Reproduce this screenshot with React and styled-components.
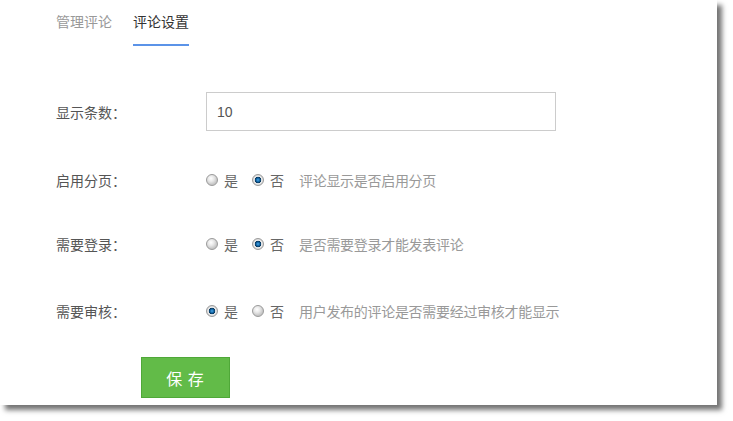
import styled, { createGlobalStyle } from "styled-components";

const GlobalStyle = createGlobalStyle`
  html, body {
    margin: 0;
    padding: 0;
    background: #fff;
    font-family: "Microsoft YaHei", "Noto Sans CJK SC", "Liberation Sans", sans-serif;
  }
`;

const settings = [
  { label: "需要登录", on: false, desc: "是否需要登录才能发表评论", mt: 44 },
  { label: "需要审核", on: true, desc: "用户发布的评论是否需要经过审核才能显示", mt: 47 },
];

function Radio({ checked, text }) {
  return (
    <Option>
      <Dot $checked={checked} />
      {text}
    </Option>
  );
}

function App() {
  return (
    <Page>
      <GlobalStyle />
      <Panel>
        <Tabs>
          <Tab>管理评论</Tab>
          <Tab $active>评论设置</Tab>
        </Tabs>
        <Form>
          <Row $mt={46}>
            <Label>显示条数：</Label>
            <Input defaultValue="10" />
          </Row>
          <Row $mt={39} $h={20}>
            <Label>启用分页：</Label>
            <Radio text="是" />
            <Radio checked text="否" />
            <Desc>评论显示是否启用分页</Desc>
          </Row>
          {settings.map((s) => (
            <Row key={s.label} $mt={s.mt} $h={20}>
              <Label>{s.label}：</Label>
              <Radio checked={s.on} text="是" />
              <Radio checked={!s.on} text="否" />
              <Desc>{s.desc}</Desc>
            </Row>
          ))}
          <SaveButton>保 存</SaveButton>
        </Form>
      </Panel>
    </Page>
  );
}

const Page = styled.div`
  width: 733px;
  height: 421px;
  background: #fff;
  overflow: hidden;
`;

const Panel = styled.div`
  width: 717px;
  height: 405px;
  background: #fff;
  box-shadow: 5px 5px 5px rgba(0, 0, 0, 0.55);
  box-sizing: border-box;
  padding-left: 56px;
`;

const Tabs = styled.div`
  display: flex;
  gap: 21px;
  height: 46px;
`;

const Tab = styled.div`
  height: 44px;
  line-height: 42px;
  font-size: 14px;
  color: ${(p) => (p.$active ? "#333" : "#999")};
  border-bottom: 2px solid ${(p) => (p.$active ? "#5b93e8" : "transparent")};
`;

const Form = styled.div`
  display: flex;
  flex-direction: column;
`;

const Row = styled.div`
  display: flex;
  align-items: center;
  margin-top: ${(p) => p.$mt}px;
  height: ${(p) => (p.$h ? `${p.$h}px` : "auto")};
`;

const Label = styled.div`
  width: 150px;
  font-size: 14px;
  color: #555;
`;

const Input = styled.input`
  width: 350px;
  height: 39px;
  box-sizing: border-box;
  border: 1px solid #ccc;
  padding: 0 10px;
  font-size: 14px;
  font-family: "Liberation Sans", sans-serif;
  color: #555;
  outline: none;
`;

const Option = styled.label`
  display: flex;
  align-items: center;
  font-size: 14px;
  color: #666;
  margin-right: 14px;
`;

const Dot = styled.span`
  width: 12px;
  height: 12px;
  border-radius: 50%;
  box-sizing: border-box;
  margin-right: 6px;
  border: 1px solid #9a9a9a;
  background: ${(p) =>
    p.$checked
      ? "radial-gradient(circle at 50% 50%, #4aa8e8 0, #0c5d9c 2px, #0a3456 3px, #f2f2f2 3.6px, #d6d6d6 5px)"
      : "radial-gradient(circle at 40% 35%, #fff 0, #e8e8e8 3px, #c6c6c6 6px)"};
`;

const Desc = styled.span`
  margin-left: 1px;
  font-size: 14px;
  color: #999;
  letter-spacing: -0.3px;
`;

const SaveButton = styled.button`
  margin-top: 36px;
  margin-left: 85px;
  width: 89px;
  height: 41px;
  background: #62bb48;
  border: 1px solid #4fa838;
  color: #fff;
  font-size: 16px;
  font-family: inherit;
  letter-spacing: 1px;
`;

export default App;
